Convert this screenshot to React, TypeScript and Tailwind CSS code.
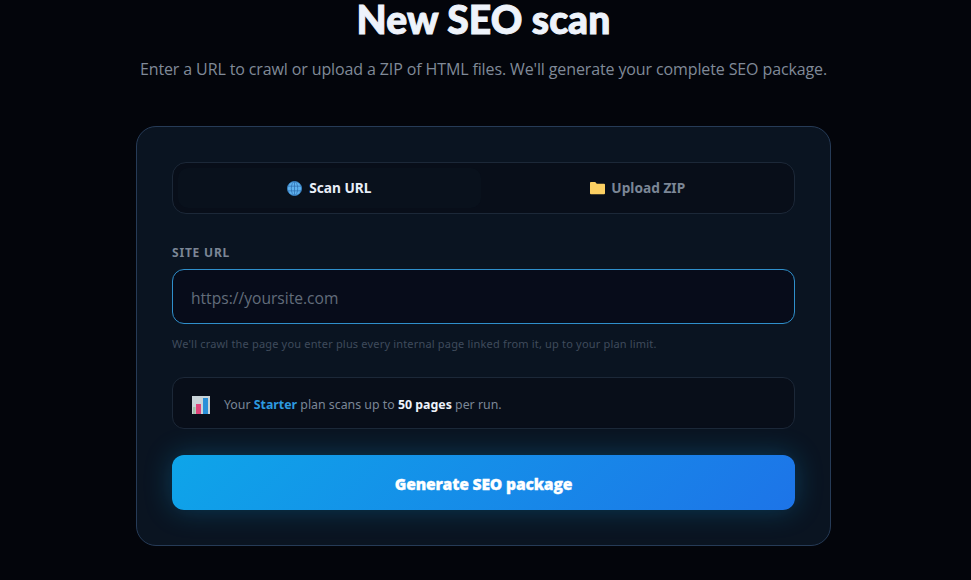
export default function App() {
  return (
    <div className="h-[580px] w-full overflow-hidden bg-[#03050b] pr-[4px] flex flex-col items-center font-['Noto_Sans',sans-serif]">
      <h1 className="mt-0 h-[40px] text-[39px] leading-[38px] font-black tracking-[0.1px] text-[#eef3fb] [-webkit-text-stroke:1px_#eef3fb] font-['Lato',sans-serif]">New SEO scan</h1>
      <p className="mt-[17px] h-[24px] text-[16px] leading-[24px] text-[#808a98] font-['Open_Sans',sans-serif] tracking-[-0.12px]">Enter a URL to crawl or upload a ZIP of HTML files. We'll generate your complete SEO package.</p>
      <div className="mt-[45px] w-[695px] h-[420px] shrink-0 rounded-[20px] border border-[#263b57] bg-[#0a1421] px-[35px] pt-[35px] flex flex-col">
        <div className="h-[52px] rounded-[14px] border border-[#1c2838] bg-[#080e19] p-[5px] gap-[4px] flex">
          <div className="flex-1 rounded-[10px] bg-[#09111c] flex items-center justify-center gap-[7px] text-[13.7px] font-bold text-[#e8eef8]">
            <svg width="15" height="15" viewBox="0 0 16 16" fill="none" stroke="#2f6fb0" strokeWidth="0.8">
              <circle cx="8" cy="8" r="7.5" fill="#5fb2ee" stroke="#3f8fd4" />
              <ellipse cx="8" cy="8" rx="3.4" ry="7.4" />
              <path d="M8 .5v15M.8 5.5h14.4M.8 10.5h14.4" />
            </svg>
            <span>Scan URL</span>
          </div>
          <div className="flex-1 rounded-[10px] pl-[2px] flex items-center justify-center gap-[6px] text-[13.7px] font-bold text-[#7b8696]">
            <svg width="15" height="14" viewBox="0 0 16 14">
              <path d="M0 1.5A1 1 0 0 1 1 .5h4.6l1.6 2H15a1 1 0 0 1 1 1V12.6a1 1 0 0 1-1 1H1a1 1 0 0 1-1-1z" fill="#fbcf62" />
            </svg>
            <span>Upload ZIP</span>
          </div>
        </div>
        <label className="mt-[31px] h-[16px] text-[12px] leading-[16px] font-bold tracking-[0.8px] text-[#7b8696]">SITE URL</label>
        <div className="mt-[8px] h-[55px] rounded-[12px] border border-[#2f8fcb] bg-[#070c1a] px-[18px] pt-[4px] flex items-center text-[15.6px] text-[#626d7b] font-['Open_Sans',sans-serif]">https://yoursite.com</div>
        <p className="mt-[12px] h-[16px] text-[11px] leading-[16px] tracking-[0.18px] text-[#3f4b5c]">We'll crawl the page you enter plus every internal page linked from it, up to your plan limit.</p>
        <div className="mt-[25px] h-[52px] rounded-[12px] border border-[#1c2838] bg-[#080e19] px-[19px] pt-[4px] flex items-center gap-[14px] text-[12.35px] text-[#7b8696]">
          <svg width="18" height="18" viewBox="0 0 18 18" className="shrink-0">
            <rect width="18" height="18" fill="#c9d3d8" />
            <rect x="4" y="8" width="5" height="10" fill="#e0457b" />
            <rect x="11" y="2" width="5" height="16" fill="#2a8fd8" />
            <rect x="1" y="11" width="2.5" height="7" fill="#9fc3a8" />
          </svg>
          <span>Your <b className="font-bold text-[#2d9ae0]">Starter</b> plan scans up to <b className="font-bold text-[#eef3fb]">50 pages</b> per run.</span>
        </div>
        <button className="mt-[26px] h-[55px] rounded-[12px] pt-[4px] bg-[linear-gradient(135deg,#0ea5e9,#1d74e8)] shadow-[0_0_28px_rgba(14,165,233,0.28)] text-[15.7px] font-extrabold text-white [-webkit-text-stroke:0.3px_#ffffff] font-['Open_Sans',sans-serif] tracking-[-0.2px]">Generate SEO package</button>
      </div>
    </div>
  );
}
